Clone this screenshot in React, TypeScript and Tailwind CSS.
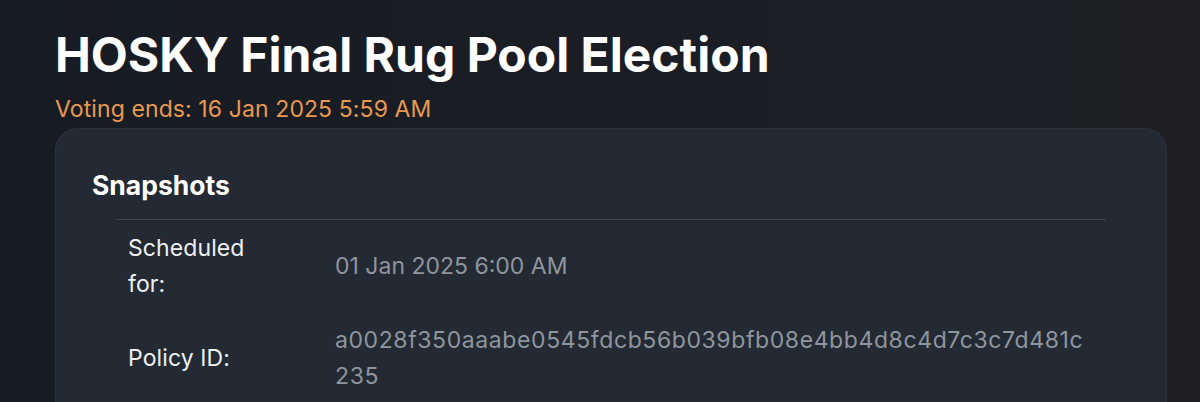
import React from "react";

export default function App() {
  return (
    <div
      className="w-[1200px] h-[402px] overflow-hidden bg-gradient-to-r from-[#171b23] via-[#1a1d24] to-[#1f1f23]"
      style={{ fontFamily: "Inter, 'Noto Sans', sans-serif" }}
    >
      <div className="pl-[55px] pr-[33px] pt-[26px]">
        <h1 className="text-[48px] font-bold leading-[58px] text-white">
          HOSKY Final Rug Pool Election
        </h1>
        <p className="mt-[11px] text-[23px] leading-[28px] text-[#e8994f] tracking-[0.1px]">
          Voting ends: 16 Jan 2025 5:59 AM
        </p>
        <div className="mt-[5px] rounded-[22px] bg-[#232a33] border border-[#29313b] pt-[40px] pb-[40px]">
          <h2 className="pl-[36px] text-[26.5px] font-bold leading-[32px] text-white">Snapshots</h2>
          <div className="mx-[60px] mt-[18px] border-t border-[#3b434d]">
            <div className="flex items-center pt-[10px] pb-[10px]">
              <div className="w-[207px] shrink-0 px-[12px] text-[23px] leading-[36px] text-[#eef0f2] tracking-[0.1px]">
                Scheduled
                <br />
                for:
              </div>
              <div className="flex-1 px-[12px] text-[23px] leading-[36px] text-[#8f959e]">
                01 Jan 2025 6:00 AM
              </div>
            </div>
            <div className="flex items-center py-[10px]">
              <div className="w-[207px] shrink-0 px-[12px] text-[23px] leading-[36px] text-[#eef0f2] tracking-[0.1px]">
                Policy ID:
              </div>
              <div className="flex-1 min-w-0 px-[12px] text-[23px] leading-[36px] text-[#8f959e] break-all tracking-[0.6px]">
                a0028f350aaabe0545fdcb56b039bfb08e4bb4d8c4d7c3c7d481c235
              </div>
            </div>
          </div>
        </div>
      </div>
    </div>
  );
}
